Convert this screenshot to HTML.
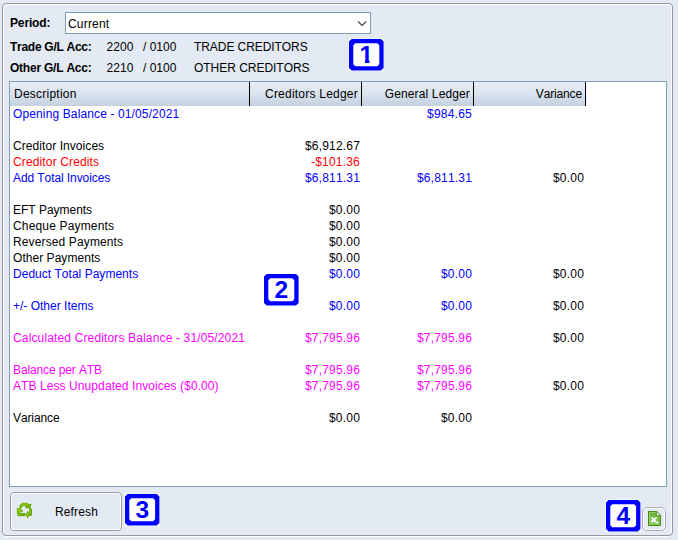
<!DOCTYPE html>
<html><head><meta charset="utf-8">
<style>
html,body{margin:0;padding:0;}
body{width:678px;height:540px;background:#e3eaf3;position:relative;overflow:hidden;font-family:"Liberation Sans",sans-serif;font-size:12px;color:#000;font-kerning:none;}
.abs{position:absolute;}
.fr{position:absolute;box-sizing:border-box;border-radius:4px;}
.lbl{position:absolute;white-space:nowrap;line-height:14px;height:14px;}
.b{font-weight:bold;}
#combo{left:65px;top:12px;width:306px;height:22px;box-sizing:border-box;border:1px solid #7f9db9;background:#fff;}
#combo span{position:absolute;left:2px;top:4px;line-height:14px;white-space:nowrap;}
#grid{left:9px;top:81px;width:658px;height:406px;box-sizing:border-box;border:1px solid #7f9db9;background:#fff;}
.hd{position:absolute;top:0;height:24px;box-sizing:border-box;border-right:1px solid #000;background:linear-gradient(#e8eef6 0%,#dde5f0 40%,#c4d1e1 100%);line-height:25px;white-space:nowrap;}
.hd i{position:absolute;right:-2px;top:0;width:1px;height:24px;background:#f4f7fb;}
.row{position:absolute;left:0;width:656px;height:16px;line-height:16px;}
.c{position:absolute;top:0;white-space:nowrap;}
.c0{left:3px;}
.c1{right:306px;}
.c2{right:194px;}
.c3{right:82px;color:#000;}
.blue{color:#0000ff;}
.red{color:#ff0000;}
.mag{color:#ff00ff;}
.bd{position:absolute;overflow:visible;}
.bd text{font-family:"Liberation Sans",sans-serif;font-weight:bold;font-size:24.5px;fill:#0000ff;text-anchor:middle;}
</style></head><body>
<div class="fr" style="left:3px;top:4px;width:669px;height:533px;border:1px solid #fff;"></div>
<div class="fr" style="left:2px;top:3px;width:671px;height:533px;border:1px solid #999;"></div>
<div class="lbl b" style="left:10px;top:16px;letter-spacing:-0.149px;">Period:</div>
<div id="combo" class="abs"><span style="letter-spacing:0.198px;">Current</span>
<svg class="abs" style="left:291px;top:7px" width="12" height="8" viewBox="0 0 12 8"><path d="M1.1 1.5 L5.1 5.5 L9.1 1.5" fill="none" stroke="#404040" stroke-width="1.1"/></svg>
</div>
<div class="lbl b" style="left:10px;top:40px;letter-spacing:-0.276px;">Trade G/L Acc:</div>
<div class="lbl" style="left:106.5px;top:40px;letter-spacing:0.049px;">2200</div>
<div class="lbl" style="left:143px;top:40px;letter-spacing:-0.012px;">/ 0100</div>
<div class="lbl" style="left:194px;top:40px;letter-spacing:-0.072px;">TRADE CREDITORS</div>
<div class="lbl b" style="left:10px;top:61px;letter-spacing:-0.228px;">Other G/L Acc:</div>
<div class="lbl" style="left:106.5px;top:61px;letter-spacing:0.049px;">2210</div>
<div class="lbl" style="left:143px;top:61px;letter-spacing:-0.012px;">/ 0100</div>
<div class="lbl" style="left:194px;top:61px;letter-spacing:-0.028px;">OTHER CREDITORS</div>
<div id="grid" class="abs">
 <div class="hd" style="left:0;width:240px;padding-left:4px;"><span style="letter-spacing:0.234px;">Description</span><i></i></div>
 <div class="hd" style="left:240px;width:112px;text-align:right;padding-right:3px;"><span style="letter-spacing:0.226px;">Creditors Ledger</span><i></i></div>
 <div class="hd" style="left:352px;width:112px;text-align:right;padding-right:3px;"><span style="letter-spacing:0.136px;">General Ledger</span><i></i></div>
 <div class="hd" style="left:464px;width:112px;text-align:right;padding-right:3px;"><span style="letter-spacing:-0.147px;">Variance</span><i></i></div>
 <div class="row blue" style="top:24px"><span class="c c0" style="letter-spacing:0.125px;">Opening Balance - 01/05/2021</span><span class="c c2" style="letter-spacing:0.230px;">$984.65</span></div>
 <div class="row " style="top:56px"><span class="c c0" style="letter-spacing:0.068px;">Creditor Invoices</span><span class="c c1" style="letter-spacing:0.179px;">$6,912.67</span></div>
 <div class="row red" style="top:72px"><span class="c c0" style="letter-spacing:0.136px;">Creditor Credits</span><span class="c c1" style="letter-spacing:0.203px;">-$101.36</span></div>
 <div class="row blue" style="top:88px"><span class="c c0" style="letter-spacing:-0.084px;">Add Total Invoices</span><span class="c c1" style="letter-spacing:0.179px;">$6,811.31</span><span class="c c2" style="letter-spacing:0.179px;">$6,811.31</span><span class="c c3" style="letter-spacing:0.194px;">$0.00</span></div>
 <div class="row " style="top:120px"><span class="c c0" style="letter-spacing:-0.022px;">EFT Payments</span><span class="c c1" style="letter-spacing:0.194px;">$0.00</span></div>
 <div class="row " style="top:136px"><span class="c c0" style="letter-spacing:0.164px;">Cheque Payments</span><span class="c c1" style="letter-spacing:0.194px;">$0.00</span></div>
 <div class="row " style="top:152px"><span class="c c0" style="letter-spacing:0.127px;">Reversed Payments</span><span class="c c1" style="letter-spacing:0.194px;">$0.00</span></div>
 <div class="row " style="top:168px"><span class="c c0" style="letter-spacing:0.043px;">Other Payments</span><span class="c c1" style="letter-spacing:0.194px;">$0.00</span></div>
 <div class="row blue" style="top:184px"><span class="c c0" style="letter-spacing:0.022px;">Deduct Total Payments</span><span class="c c1" style="letter-spacing:0.194px;">$0.00</span><span class="c c2" style="letter-spacing:0.194px;">$0.00</span><span class="c c3" style="letter-spacing:0.194px;">$0.00</span></div>
 <div class="row blue" style="top:216px"><span class="c c0" style="letter-spacing:0.003px;">+/- Other Items</span><span class="c c1" style="letter-spacing:0.194px;">$0.00</span><span class="c c2" style="letter-spacing:0.194px;">$0.00</span><span class="c c3" style="letter-spacing:0.194px;">$0.00</span></div>
 <div class="row mag" style="top:248px"><span class="c c0" style="letter-spacing:0.145px;">Calculated Creditors Balance - 31/05/2021</span><span class="c c1" style="letter-spacing:0.179px;">$7,795.96</span><span class="c c2" style="letter-spacing:0.179px;">$7,795.96</span><span class="c c3" style="letter-spacing:0.194px;">$0.00</span></div>
 <div class="row mag" style="top:280px"><span class="c c0" style="letter-spacing:-0.121px;">Balance per ATB</span><span class="c c1" style="letter-spacing:0.179px;">$7,795.96</span><span class="c c2" style="letter-spacing:0.179px;">$7,795.96</span></div>
 <div class="row mag" style="top:296px"><span class="c c0" style="letter-spacing:0.083px;">ATB Less Unupdated Invoices ($0.00)</span><span class="c c1" style="letter-spacing:0.179px;">$7,795.96</span><span class="c c2" style="letter-spacing:0.179px;">$7,795.96</span><span class="c c3" style="letter-spacing:0.194px;">$0.00</span></div>
 <div class="row " style="top:328px"><span class="c c0" style="letter-spacing:-0.109px;">Variance</span><span class="c c1" style="letter-spacing:0.194px;">$0.00</span><span class="c c2" style="letter-spacing:0.194px;">$0.00</span></div>
</div>
<svg class="bd" style="left:263.70px;top:273.60px" width="34.60" height="31.60"><rect x="-0.4" y="-0.4" width="35.40" height="32.40" fill="#fff"/><path d="M2.60 0.00L32.00 0.00L34.60 2.60L34.60 29.00L32.00 31.60L2.60 31.60L0.00 29.00L0.00 2.60ZM6.30 4.30L28.30 4.30L30.30 6.30L30.30 25.30L28.30 27.30L6.30 27.30L4.30 25.30L4.30 6.30Z" fill="#0000ff" fill-rule="evenodd"/><text x="17.30" y="24.25">2</text></svg>
<svg class="bd" style="left:124.80px;top:493.60px" width="34.40" height="31.60"><rect x="-0.4" y="-0.4" width="35.20" height="32.40" fill="#fff"/><path d="M2.60 0.00L31.80 0.00L34.40 2.60L34.40 29.00L31.80 31.60L2.60 31.60L0.00 29.00L0.00 2.60ZM6.30 4.30L28.10 4.30L30.10 6.30L30.10 25.30L28.10 27.30L6.30 27.30L4.30 25.30L4.30 6.30Z" fill="#0000ff" fill-rule="evenodd"/><text x="17.20" y="24.25">3</text></svg>
<svg class="bd" style="left:605.80px;top:499.80px" width="34.40" height="31.50"><rect x="-0.4" y="-0.4" width="35.20" height="32.30" fill="#fff"/><path d="M2.60 0.00L31.80 0.00L34.40 2.60L34.40 28.90L31.80 31.50L2.60 31.50L0.00 28.90L0.00 2.60ZM6.30 4.30L28.10 4.30L30.10 6.30L30.10 25.20L28.10 27.20L6.30 27.20L4.30 25.20L4.30 6.30Z" fill="#0000ff" fill-rule="evenodd"/><text x="17.20" y="24.20">4</text></svg>
<svg class="bd" style="left:348.70px;top:38.60px" width="34.60" height="31.60"><rect x="-0.4" y="-0.4" width="35.40" height="32.40" fill="#fff"/><path d="M2.60 0.00L32.00 0.00L34.60 2.60L34.60 29.00L32.00 31.60L2.60 31.60L0.00 29.00L0.00 2.60ZM6.30 4.30L28.30 4.30L30.30 6.30L30.30 25.30L28.30 27.30L6.30 27.30L4.30 25.30L4.30 6.30Z" fill="#0000ff" fill-rule="evenodd"/><clipPath id="k1"><path d="M0 0H34.60V20.85H20.50V26.25H15.90V20.85H0Z"/></clipPath><text x="17.30" y="24.25" clip-path="url(#k1)">1</text></svg>
<div class="fr" style="left:10px;top:492px;width:112px;height:39px;border:1px solid #999;"></div>
<div class="fr" style="left:11px;top:493px;width:110px;height:37px;border:1px solid #fff;border-radius:3px;"></div>
<svg class="abs" style="left:12px;top:500px" width="24" height="24" viewBox="0 0 24 24">
<defs><linearGradient id="gg" x1="0" y1="0" x2="1" y2="1"><stop offset="0" stop-color="#a2d800"/><stop offset="1" stop-color="#62aa00"/></linearGradient>
<filter id="gl" x="-30%" y="-30%" width="160%" height="160%"><feGaussianBlur stdDeviation="0.9"/></filter></defs>
<g id="rc">
<path d="M7.2 6.7 L9.3 3.7 Q9.8 3.1 10.6 3.1 L15.5 3.1 L16.2 4.5 L19.2 4.0 L18.0 8.0 L13.1 7.7 L14.5 5.4 L11.2 5.4 L9.3 8.0 Z"/>
<path d="M5.1 8.5 L8.3 8.3 L10.9 11.6 L8.7 11.0 L7.9 13.3 L12.9 13.3 L12.9 15.8 L6.8 15.8 Q5.3 15.8 5.4 14.0 Z"/>
<path d="M17.0 8.6 L19.3 8.5 Q20.2 11 19.7 14.2 Q19.5 15.7 18.2 15.7 L16.2 15.7 L16.0 18.3 L13.6 14.6 L16.0 11.3 L16.2 13.4 L17.5 13.4 Q17.8 11 17.0 8.6 Z"/>
</g>
<use href="#rc" fill="#fff" stroke="#fff" stroke-width="1.6" opacity="0.55" filter="url(#gl)"/>
<use href="#rc" fill="url(#gg)" stroke="#4f9800" stroke-width="0.5" stroke-linejoin="round"/>
</svg>

<div class="lbl" style="left:55px;top:505px;letter-spacing:0.138px;">Refresh</div>
<div class="fr" style="left:642px;top:507px;width:24px;height:24px;border:1px solid #adadad;border-radius:5px;"></div>
<div class="fr" style="left:643px;top:508px;width:22px;height:22px;border:1px solid #fff;border-radius:4px;"></div>
<svg class="abs" style="left:646px;top:509px" width="18" height="20" viewBox="0 0 18 20">
<defs><linearGradient id="xg" x1="0" y1="0" x2="0" y2="1"><stop offset="0" stop-color="#6aaa38"/><stop offset="0.4" stop-color="#78bc48"/><stop offset="1" stop-color="#86cc58"/></linearGradient></defs>
<path d="M2.5 2.5 H10.8 L14.5 6.2 V16.5 H2.5 Z" fill="url(#xg)" stroke="#418c16" stroke-width="1"/>
<path d="M3.5 15.5 V3.5 H10" fill="none" stroke="#a6dc80" stroke-width="1" opacity="0.7"/>
<path d="M10.6 2.9 V6.4 H14.1 Z" fill="#fff"/>
<path d="M10.3 3 V6.7 H14" fill="none" stroke="#418c16" stroke-width="0.8"/>
<path d="M5.4 8.4 L9.9 12.7 M10.7 8.3 L5.4 12.7" stroke="#fff" stroke-width="1.5" fill="none"/>
<path d="M4.9 12.7 H9.6 L11.6 13.6" stroke="#fff" stroke-width="1.1" fill="none"/>
<circle cx="11.4" cy="13.7" r="0.95" fill="#fff"/>
</svg>

</body></html>
